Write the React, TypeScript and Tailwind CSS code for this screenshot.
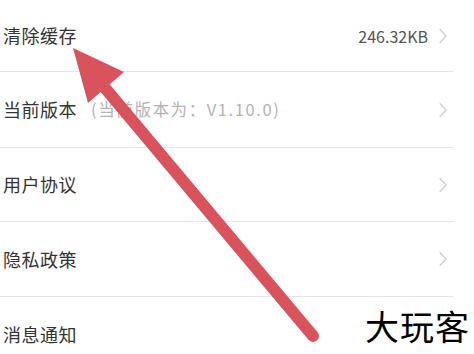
import React from "react";

const rows = [
  { label: "清除缓存", value: "246.32KB", h: "h-[72px]" },
  { label: "当前版本", note: "(当前版本为：V1.10.0)", h: "h-[76px]" },
  { label: "用户协议", h: "h-[74px]" },
  { label: "隐私政策", h: "h-[75px]" },
  { label: "消息通知", h: "h-[75px]" },
];

function Chevron() {
  return (
    <svg width="10" height="16" viewBox="0 0 10 16" fill="none">
      <path d="M2 1.5 L8 8 L2 14.5" stroke="#cfcfcf" strokeWidth="1.3" strokeLinecap="round" strokeLinejoin="round" />
    </svg>
  );
}

export default function App() {
  return (
    <div
      className="relative w-[474px] h-[354px] overflow-hidden bg-white"
      style={{ fontFamily: '"Noto Sans CJK SC", "Noto Sans", sans-serif' }}
    >
      <div className="flex flex-col w-[454px]">
        {rows.map((r, i) => (
          <div
            key={i}
            className={`flex items-center shrink-0 pl-[3px] pr-[6px] border-b border-[#e6e6e6] ${r.h}`}
          >
            <span className="text-[18px] text-[#333] tracking-[0.5px]">{r.label}</span>
            {r.note && (
              <span className="ml-[14px] text-[16.5px] text-[#b3b3b3] tracking-[1.6px]">{r.note}</span>
            )}
            <div className="ml-auto flex items-center gap-[10px]">
              {r.value && <span className="text-[16px] text-[#555]">{r.value}</span>}
              {i !== 4 && <Chevron />}
            </div>
          </div>
        ))}
      </div>

      <svg className="absolute left-0 top-0" width="474" height="354" viewBox="0 0 474 354">
        <line x1="313" y1="336" x2="100" y2="82" stroke="#d9535d" strokeWidth="12" strokeLinecap="round" />
        <polygon points="73,48 124,72 88,103" fill="#d9535d" />
      </svg>

      <div className="absolute left-[365px] top-[309px] text-[34px] leading-none text-black tracking-[1px]">
        大玩客
      </div>
    </div>
  );
}
